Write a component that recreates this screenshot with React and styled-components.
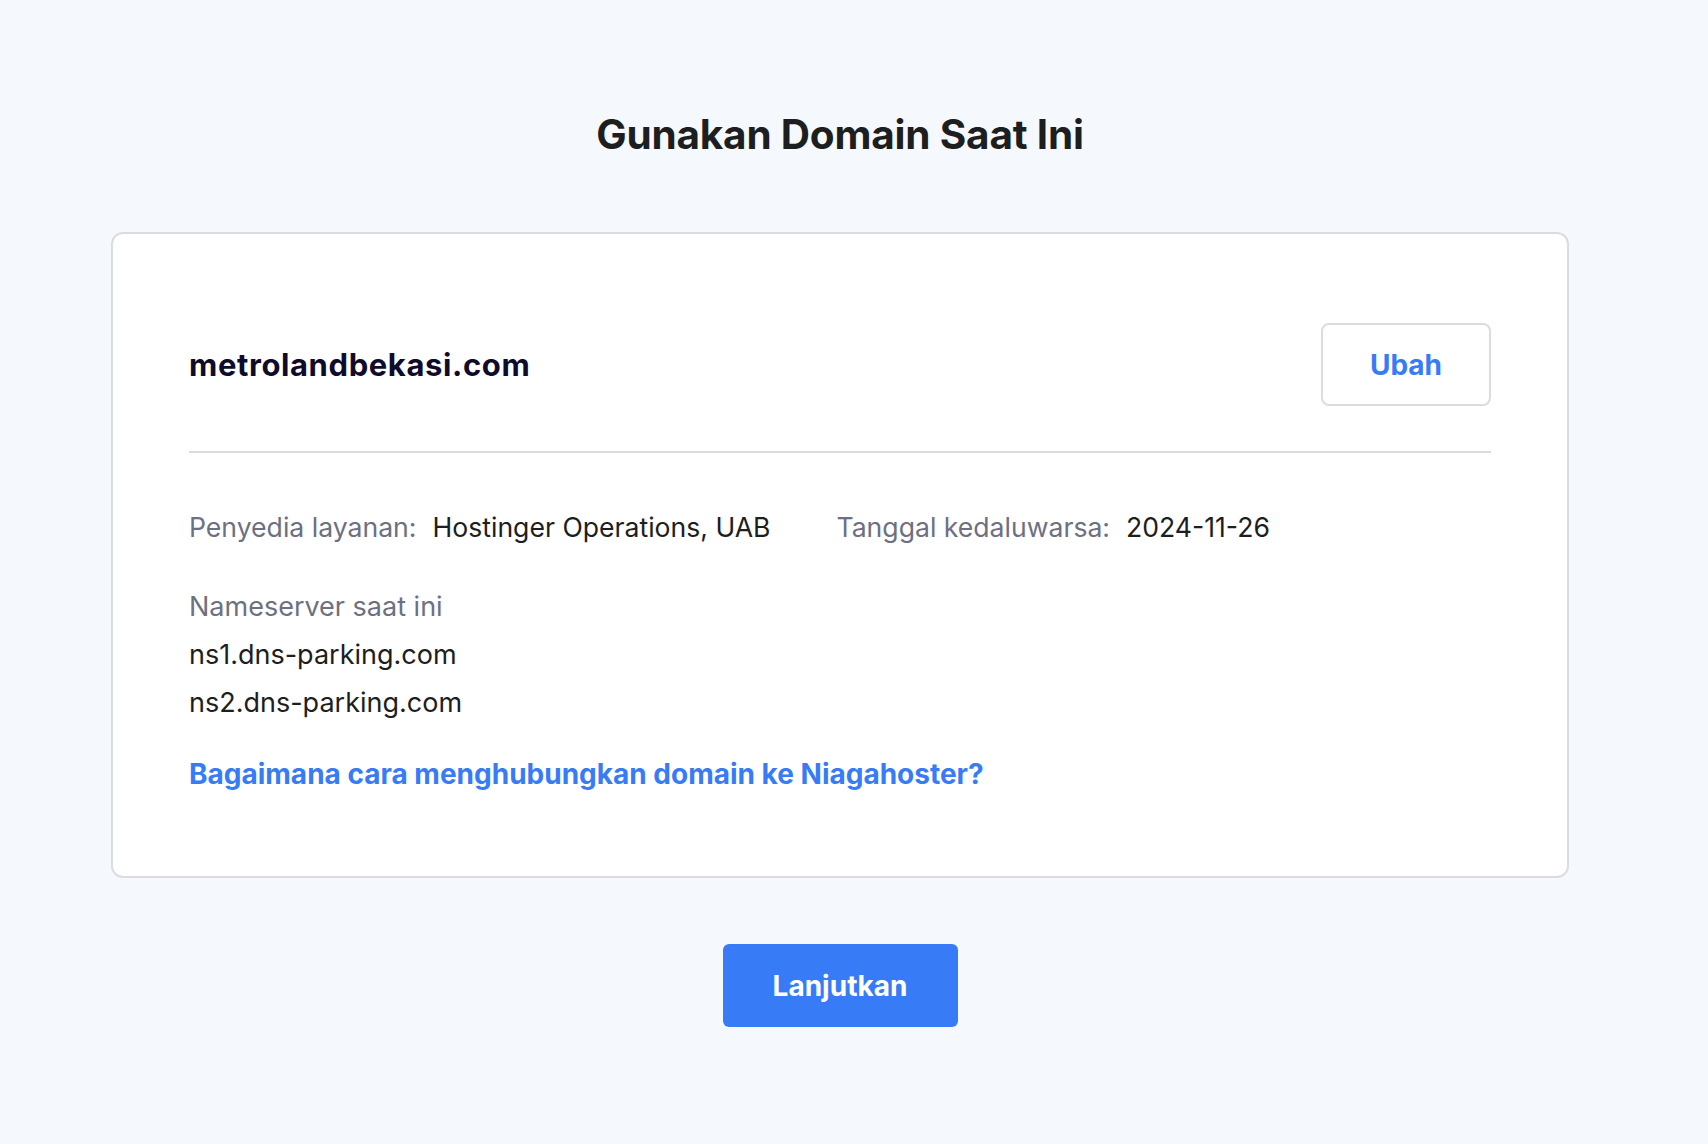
import styled, { createGlobalStyle } from 'styled-components'

const GlobalStyle = createGlobalStyle`
  html, body {
    margin: 0;
    padding: 0;
    background: #f5f8fd;
  }
  body {
    font-family: Inter, "Noto Sans", "Liberation Sans", sans-serif;
    color: #1d1e20;
  }
`

const Page = styled.div`
  width: 1458px;
  margin-left: 111px;
  padding-top: 107px;
  padding-bottom: 118px;
  display: flex;
  flex-direction: column;
  align-items: center;
`

const Title = styled.h1`
  margin: 0 0 69px;
  font-size: 40.5px;
  line-height: 56px;
  font-weight: 700;
  color: #1d1e20;
  letter-spacing: -0.2px;
`

const Card = styled.div`
  box-sizing: border-box;
  width: 100%;
  background: #fff;
  border: 2px solid #dadce0;
  border-radius: 12px;
  padding: 89px 76px 84px;
`

const Header = styled.div`
  display: flex;
  align-items: center;
  justify-content: space-between;
  padding-bottom: 45px;
  border-bottom: 2px solid #dadce0;
`

const Domain = styled.div`
  font-size: 31px;
  font-weight: 700;
  letter-spacing: 0.6px;
  color: #0f0c2b;
`

const OutlineButton = styled.button`
  width: 170px;
  height: 83px;
  background: #fff;
  border: 2px solid #dadce0;
  border-radius: 8px;
  font-family: inherit;
  font-size: 28px;
  font-weight: 700;
  color: #377cf6;
  cursor: pointer;
`

const InfoRow = styled.div`
  display: flex;
  gap: 66px;
  margin-top: 56px;
`

const Info = styled.div`
  display: flex;
  gap: 16px;
  font-size: 26.6px;
  line-height: 36px;
`

const Label = styled.span`
  color: #6d7081;
`

const Value = styled.span`
  color: #1d1e20;
`

const Nameservers = styled.div`
  margin-top: 38px;
  display: flex;
  flex-direction: column;
  font-size: 27px;
  line-height: 48px;
`

const Link = styled.a`
  display: block;
  margin-top: 29px;
  font-size: 28px;
  line-height: 36px;
  font-weight: 700;
  color: #377cf6;
  text-decoration: none;
`

const PrimaryButton = styled.button`
  margin-top: 66px;
  width: 235px;
  height: 83px;
  background: #377cf6;
  border: none;
  border-radius: 6px;
  font-family: inherit;
  font-size: 28px;
  font-weight: 700;
  color: #fff;
  cursor: pointer;
`

export default function App() {
  return (
    <>
      <GlobalStyle />
      <Page>
        <Title>Gunakan Domain Saat Ini</Title>
        <Card>
          <Header>
            <Domain>metrolandbekasi.com</Domain>
            <OutlineButton>Ubah</OutlineButton>
          </Header>
          <InfoRow>
            <Info>
              <Label>Penyedia layanan:</Label>
              <Value>Hostinger Operations, UAB</Value>
            </Info>
            <Info>
              <Label>Tanggal kedaluwarsa:</Label>
              <Value>2024-11-26</Value>
            </Info>
          </InfoRow>
          <Nameservers>
            <Label>Nameserver saat ini</Label>
            <Value>ns1.dns-parking.com</Value>
            <Value>ns2.dns-parking.com</Value>
          </Nameservers>
          <Link href="#">Bagaimana cara menghubungkan domain ke Niagahoster?</Link>
        </Card>
        <PrimaryButton>Lanjutkan</PrimaryButton>
      </Page>
    </>
  )
}
